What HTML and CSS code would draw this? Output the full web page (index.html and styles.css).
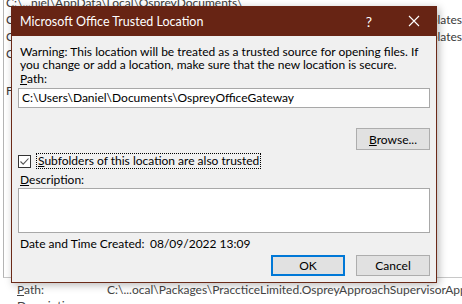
FILE: index.html
```html
<!DOCTYPE html>
<html>
<head>
<meta charset="utf-8">
<link rel="stylesheet" href="styles.css">
</head>
<body>
<div class="page">
  <div class="panel">
    <div class="row"><span class="cell-path">C:\...niel\AppData\Local\OspreyDocuments\</span><span class="cell-desc"></span></div>
    <div class="row"><span class="cell-path">C</span><span class="cell-desc">on Templates</span></div>
    <div class="row"><span class="cell-path">C</span><span class="cell-desc">plates</span></div>
    <div class="row"><span class="cell-path">C</span><span class="cell-desc"></span></div>
    <div class="row gap"><span class="cell-path">F</span></div>
  </div>
  <div class="details">
    <div class="drow"><span class="dlabel"><u>P</u>ath:</span><span class="dval">C:\...ocal\Packages\PraccticeLimited.OspreyApproachSupervisorApp</span></div>
    <div class="drow"><span class="dlabel">Description:</span><span class="dval"></span></div>
  </div>

  <div class="dialog">
    <div class="titlebar">
      <span class="title">Microsoft Office Trusted Location</span>
      <span class="tb-help">?</span>
      <span class="tb-close"><svg width="12" height="12" viewBox="0 0 12 12"><path d="M1 1 L11 11 M11 1 L1 11" stroke="#fff" stroke-width="1.1" fill="none"/></svg></span>
    </div>
    <div class="content">
      <p class="warning">Warning: This location will be treated as a trusted source for opening files. If you change or add a location, make sure that the new location is secure.</p>
      <div class="label"><u>P</u>ath:</div>
      <div class="input">C:\Users\Daniel\Documents\OspreyOfficeGateway</div>
      <div class="browse-row"><span class="btn"><u>B</u>rowse...</span></div>
      <div class="check-row">
        <span class="checkbox"><svg width="11" height="11" viewBox="0 0 11 11"><path d="M1.5 5.5 L4.2 8.2 L9.5 2.5" stroke="#555" stroke-width="1.1" fill="none"/></svg></span>
        <span class="check-label"><u>S</u>ubfolders of this location are also trusted</span>
      </div>
      <div class="label desc-label"><u>D</u>escription:</div>
      <div class="textarea"></div>
      <div class="date-row"><span class="date-label">Date and Time Created:</span><span>08/09/2022 13:09</span></div>
      <div class="btn-row"><span class="btn btn-ok">OK</span><span class="btn">Cancel</span></div>
    </div>
  </div>
</div>
</body>
</html>
```

FILE: styles.css
```css
* { box-sizing: border-box; }
html, body { margin: 0; padding: 0; }
body {
  width: 462px;
  height: 304px;
  overflow: hidden;
  background: #ffffff;
  font-family: "Lato", "Noto Sans", sans-serif;
  font-size: 12px;
  color: #000;
}
.page { position: relative; width: 462px; height: 304px; overflow: hidden; }

.panel {
  margin-left: 3px;
  height: 278px;
  border-left: 1px solid #b4b4b4;
  border-bottom: 1px solid #c8c8c8;
  overflow: hidden;
}
.row {
  display: flex;
  height: 17px;
  line-height: 17px;
  color: #3a3a3a;
  white-space: nowrap;
}
.row:first-child { margin-top: -6px; }
.row.gap { margin-top: 20px; }
.cell-path { width: 432px; padding-left: 2px; overflow: hidden; }
.cell-desc { flex: 1; }

.details { padding-left: 17px; color: #444; }
.drow { display: flex; height: 16px; line-height: 16px; white-space: nowrap; margin-top: 4px; }
.drow + .drow { margin-top: 0; }
.dlabel { width: 90px; flex: 0 0 90px; }

.dialog {
  position: absolute;
  left: 11px;
  top: 6px;
  width: 426px;
  height: 277px;
  border: 1px solid #6b2a18;
  border-top: none;
  background: #f0f0f0;
  box-shadow: 2px 2px 8px rgba(0,0,0,0.28);
  display: flex;
  flex-direction: column;
}
.titlebar {
  flex: 0 0 30px;
  height: 30px;
  margin: 0 -1px;
  background: #672414;
  color: #fff;
  display: flex;
  align-items: center;
  padding-left: 9px;
  font-size: 12.5px;
}
.title { flex: 1; }
.tb-help { width: 12px; text-align: center; margin-right: 33px; font-size: 14px; }
.tb-close { width: 12px; height: 12px; margin-right: 17px; display: flex; }

.content { padding: 9px 6px 0 6px; display: flex; flex-direction: column; }
.warning { margin: 0 0 0 2px; line-height: 13px; }
.label { margin-left: 2px; line-height: 14px; margin-top: 1px; }
.input {
  margin-top: 2px;
  height: 20px;
  border: 1px solid #a8a8a8;
  background: #fff;
  padding-left: 3px;
  line-height: 18px;
  white-space: nowrap;
}
.browse-row { display: flex; justify-content: flex-end; margin-top: 20px; }
.btn {
  width: 74px;
  height: 22px;
  border: 1px solid #adadad;
  background: #e1e1e1;
  display: flex;
  align-items: center;
  justify-content: center;
}
.check-row { display: flex; align-items: center; margin-top: 3px; height: 16px; }
.checkbox {
  width: 13px; height: 13px;
  border: 1px solid #333;
  background: #fff;
  display: flex;
  align-items: center;
  justify-content: center;
}
.check-label {
  margin-left: 5px;
  border: 1px dotted #000;
  padding: 0 1px;
  line-height: 14px;
  white-space: nowrap;
}
.desc-label { margin-top: 4px; }
.textarea { margin-top: 1px; height: 45px; border: 1px solid #a8a8a8; background: #fff; }
.date-row { display: flex; margin-top: 3px; margin-left: 2px; line-height: 16px; }
.date-label { width: 130px; }
.btn-row { display: flex; justify-content: flex-end; gap: 11px; margin-top: 3px; }
.btn-row .btn { height: 21px; }
.btn-ok { border: 2px solid #0078d7; }
```
